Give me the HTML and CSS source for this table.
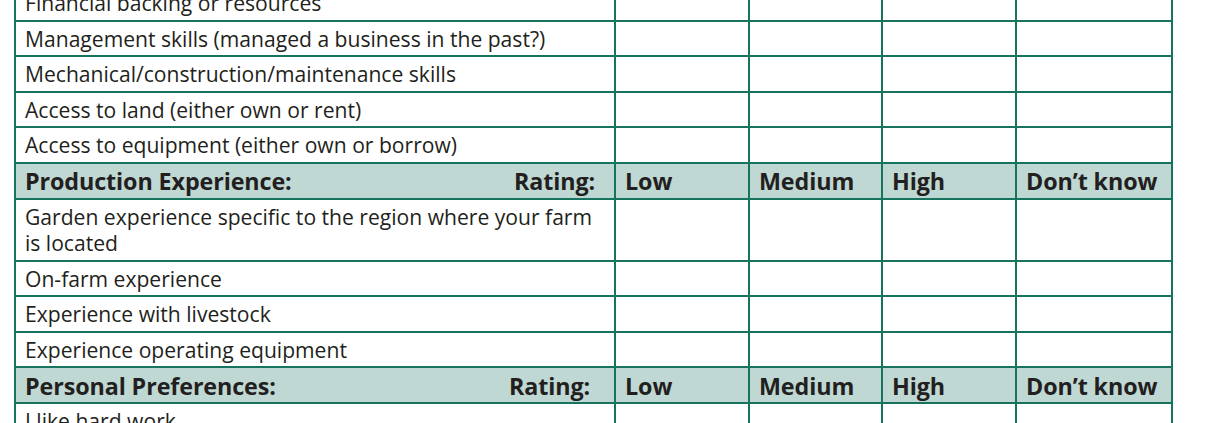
FILE: index.html
```html
<!DOCTYPE html>
<html lang="en">
<head>
<meta charset="utf-8">
<title>Assessment</title>
<link rel="stylesheet" href="styles.css">
</head>
<body>
<div class="page">
<table class="grid">
  <colgroup>
    <col class="c-item"><col class="c-low"><col class="c-med"><col class="c-high"><col class="c-dk">
  </colgroup>
  <tbody>
    <tr class="row"><td>Financial backing or resources</td><td></td><td></td><td></td><td></td></tr>
    <tr class="row"><td>Management skills (managed a business in the past?)</td><td></td><td></td><td></td><td></td></tr>
    <tr class="row"><td>Mechanical/construction/maintenance skills</td><td></td><td></td><td></td><td></td></tr>
    <tr class="row"><td>Access to land (either own or rent)</td><td></td><td></td><td></td><td></td></tr>
    <tr class="row"><td>Access to equipment (either own or borrow)</td><td></td><td></td><td></td><td></td></tr>
    <tr class="head"><td><div class="head-cell"><span>Production Experience:</span><span>Rating:</span></div></td><td>Low</td><td>Medium</td><td>High</td><td>Don’t know</td></tr>
    <tr class="row tall"><td>Garden experience specific to the region where your farm<br>is located</td><td></td><td></td><td></td><td></td></tr>
    <tr class="row"><td>On-farm experience</td><td></td><td></td><td></td><td></td></tr>
    <tr class="row"><td>Experience with livestock</td><td></td><td></td><td></td><td></td></tr>
    <tr class="row"><td>Experience operating equipment</td><td></td><td></td><td></td><td></td></tr>
    <tr class="head"><td><div class="head-cell alt"><span>Personal Preferences:</span><span>Rating:</span></div></td><td>Low</td><td>Medium</td><td>High</td><td>Don’t know</td></tr>
    <tr class="row"><td>I like hard work</td><td></td><td></td><td></td><td></td></tr>
  </tbody>
</table>
</div>
</body>
</html>
```

FILE: styles.css
```css
html, body {
  margin: 0;
  padding: 0;
  background: #ffffff;
}
body {
  font-family: "Open Sans", "Noto Sans", sans-serif;
  color: #231f20;
  overflow: hidden;
}
.page {
  padding-left: 14px;
}
.grid {
  margin-top: -16px;
  border-collapse: separate;
  border-spacing: 0;
  table-layout: fixed;
  width: 1159px;
  border-left: 2px solid #16735e;
  border-top: 2px solid #16735e;
}
.c-item { width: 600px; }
.c-low { width: 134px; }
.c-med { width: 133px; }
.c-high { width: 134px; }
.c-dk { width: 156px; }
.grid td {
  border-right: 2px solid #16735e;
  border-bottom: 2px solid #16735e;
  padding: 4px 8px 0 9px;
  vertical-align: top;
  font-size: 21.1px;
  line-height: 26px;
  height: 35.5px;
  box-sizing: border-box;
  white-space: nowrap;
}
.row.tall td { height: 62px; }
.head td {
  background: #bfd8d3;
  font-weight: 700;
  font-size: 23.3px;
  letter-spacing: -0.1px;
  height: 36px;
  padding-top: 4.5px;
}
.head-cell {
  display: flex;
  justify-content: space-between;
  padding-right: 11px;
}
.head-cell.alt { padding-right: 16px; }
```
